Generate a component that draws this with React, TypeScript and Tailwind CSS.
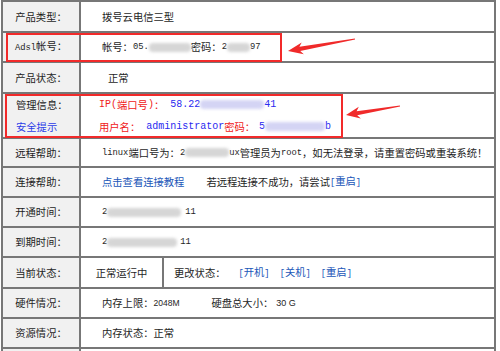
import React from "react";

const CJK = "font-['Noto_Sans_CJK_SC',sans-serif]";
const MONO9 = "font-['Liberation_Mono','Noto_Sans_CJK_SC',monospace] text-[8.8px]";
const MONO10 = "font-['Liberation_Mono','Noto_Sans_CJK_SC',monospace] text-[10px]";

function Blur({ w, blue }: { w: string; blue?: boolean }) {
  return (
    <span
      className={`inline-block h-[9px] rounded-sm blur-[1.5px] ${w} ${
        blue ? "bg-[#d4d4f4]" : "bg-[#d6d6d6]"
      }`}
    />
  );
}

function Row({
  label,
  h,
  children,
}: {
  label: React.ReactNode;
  h: string;
  children?: React.ReactNode;
}) {
  return (
    <div className={`flex border-b-2 border-[#777777] ${h}`}>
      <div className="w-[78px] shrink-0 bg-[#f1f1f1] border-r-2 border-[#777777] flex items-center justify-center">
        {label}
      </div>
      <div className="flex-1 flex items-center pl-[21px] bg-white">{children}</div>
    </div>
  );
}

export default function App() {
  return (
    <div
      className={`relative w-[500px] h-[351px] overflow-hidden bg-white text-[10.3px] leading-[12px] text-[#1e1e1e] ${CJK}`}
    >
      <div className="ml-px w-[495px] border-t-2 border-l-2 border-r-2 border-[#777777]">
        <Row label="产品类型：" h="h-[31px]">
          <span>拨号云电信三型</span>
        </Row>
        <Row
          label={
            <span>
              <span className={MONO9}>Adsl</span>帐号：
            </span>
          }
          h="h-[30px]"
        >
          <span>帐号：</span>
          <span className={MONO9}>05.</span>
          <Blur w="w-[42px]" />
          <span>密码：</span>
          <span className={MONO9}>2</span>
          <Blur w="w-[23px]" />
          <span className={MONO9}>97</span>
        </Row>
        <Row label="产品状态：" h="h-[31px]">
          <span className="ml-[6px]">正常</span>
        </Row>
        <div className="flex border-b-2 border-[#777777] h-[45px]">
          <div className="w-[78px] shrink-0 bg-[#f1f1f1] border-r-2 border-[#777777] flex flex-col justify-center pl-[13px] gap-[10px]">
            <span>管理信息：</span>
            <span className="text-[#2b3ce8]">安全提示</span>
          </div>
          <div className="flex-1 flex flex-col justify-center pl-[18px] gap-[10px] bg-white">
            <div className="flex items-center text-[#f02020]">
              <span className={MONO10}>IP(</span>
              <span>端口号</span>
              <span className={MONO10}>)</span>
              <span>：</span>
              <span className={`${MONO10} ml-[6px] text-[#2a2af0]`}>58.22</span>
              <Blur w="w-[64px]" blue />
              <span className={`${MONO10} text-[#2a2af0]`}>41</span>
            </div>
            <div className="flex items-center text-[#f02020]">
              <span>用户名：</span>
              <span className={`${MONO10} ml-[6px] text-[#2a2af0]`}>administrator</span>
              <span>密码：</span>
              <span className={`${MONO10} ml-[4px] text-[#2a2af0]`}>5</span>
              <Blur w="w-[60px]" blue />
              <span className={`${MONO10} text-[#2a2af0]`}>b</span>
            </div>
          </div>
        </div>
        <Row label="远程帮助：" h="h-[29px]">
          <span className={MONO9}>linux</span>
          <span>端口号为：</span>
          <span className={MONO9}>2</span>
          <Blur w="w-[44px]" />
          <span className={MONO9}>ux</span>
          <span>管理员为</span>
          <span className={MONO9}>root</span>
          <span>，如无法登录，请重置密码或重装系统！</span>
        </Row>
        <Row label="连接帮助：" h="h-[30px]">
          <span className="text-[#2156b8]">点击查看连接教程</span>
          <span className="ml-[22px]">若远程连接不成功，请尝试</span>
          <span className="text-[#2156b8]">
            <span className={MONO9}>[</span>重启<span className={MONO9}>]</span>
          </span>
        </Row>
        <Row label="开通时间：" h="h-[30px]">
          <span className={MONO9}>2</span>
          <Blur w="w-[74px]" />
          <span className={`${MONO9} ml-[4px]`}>11</span>
        </Row>
        <Row label="到期时间：" h="h-[30px]">
          <span className={MONO9}>2</span>
          <Blur w="w-[70px]" />
          <span className={`${MONO9} ml-[3px]`}>11</span>
        </Row>
        <div className="flex border-b-2 border-[#777777] h-[31px]">
          <div className="w-[78px] shrink-0 bg-[#f1f1f1] border-r-2 border-[#777777] flex items-center justify-center">
            当前状态：
          </div>
          <div className="w-[83px] shrink-0 border-r-2 border-[#777777] flex items-center justify-center bg-white">
            正常运行中
          </div>
          <div className="flex-1 flex items-center pl-[10px] bg-white">
            <span>更改状态：</span>
            <div className="flex items-center gap-[10px] ml-[13px] text-[#2156b8]">
              <span>
                <span className={MONO9}>[</span>开机<span className={MONO9}>]</span>
              </span>
              <span>
                <span className={MONO9}>[</span>关机<span className={MONO9}>]</span>
              </span>
              <span>
                <span className={MONO9}>[</span>重启<span className={MONO9}>]</span>
              </span>
            </div>
          </div>
        </div>
        <Row label="硬件情况：" h="h-[30px]">
          <span>内存上限：</span>
          <span className="font-['Liberation_Sans',sans-serif] text-[8.5px]">2048M</span>
          <span className="ml-[32px]">硬盘总大小：</span>
          <span className="font-['Liberation_Sans',sans-serif] text-[9px] ml-[3px]">30 G</span>
        </Row>
        <Row label="资源情况：" h="h-[30px]">
          <span>内存状态：正常</span>
        </Row>
        <Row label="" h="h-[30px]" />
      </div>

      {/* annotation boxes */}
      <div className="absolute left-[6px] top-[33px] w-[276px] h-[29px] border-2 border-[#f22a2a]" />
      <div className="absolute left-[5px] top-[94px] w-[338px] h-[44px] border-2 border-[#f22a2a]" />

      <svg
        className="absolute inset-0 pointer-events-none"
        width="500"
        height="351"
        viewBox="0 0 500 351"
      >
        <polygon
          fill="#f02a2a"
          points="288,51 303.8,54.3 300.2,51.1 355.1,39.6 354.9,38.4 299.4,46.7 301.7,42.5"
        />
        <polygon
          fill="#f02a2a"
          points="346,115 360.8,118.6 357.2,115.2 400.1,106.6 399.9,105.4 356.6,111.2 358.8,106.8"
        />
      </svg>
    </div>
  );
}
